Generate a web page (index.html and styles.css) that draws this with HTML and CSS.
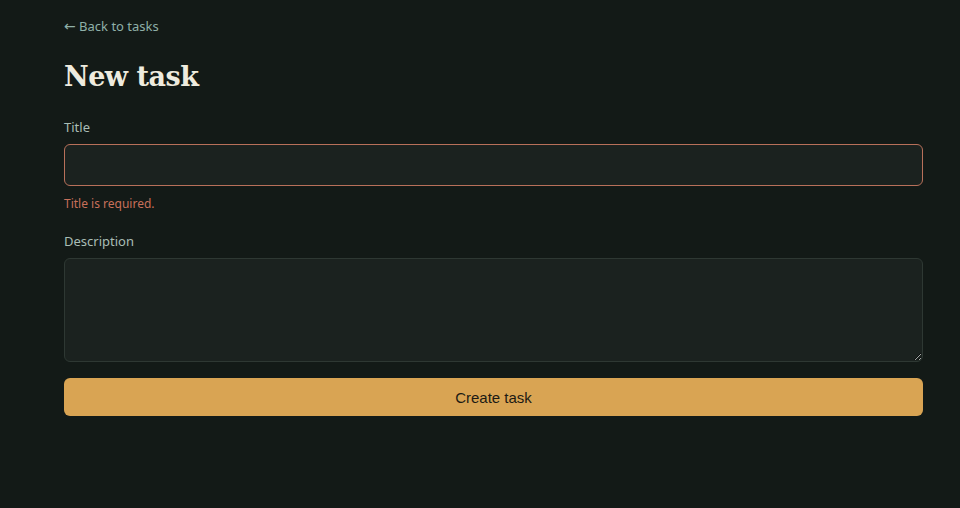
FILE: index.html
```html
<!DOCTYPE html>
<html>
<head>
<meta charset="utf-8">
<link rel="stylesheet" href="styles.css">
</head>
<body>
<main class="page">
  <a class="back" href="#"><span class="arrow">←</span> Back to tasks</a>
  <h1 class="title">New task</h1>
  <form class="form">
    <div class="field">
      <label class="label" for="t">Title</label>
      <input class="input input-error" id="t" type="text">
      <p class="error">Title is required.</p>
    </div>
    <div class="field">
      <label class="label" for="d">Description</label>
      <textarea class="input textarea" id="d"></textarea>
    </div>
    <button class="submit" type="button">Create task</button>
  </form>
</main>
</body>
</html>
```

FILE: styles.css
```css
html, body {
  margin: 0;
  padding: 0;
  background: #131a17;
}
body {
  font-family: "Noto Sans", "Open Sans", sans-serif;
  color: #a9bdb5;
}
.page {
  width: 859px;
  margin-left: 64px;
  padding-top: 14px;
}
.back {
  display: inline-block;
  color: #8fb0a8;
  text-decoration: none;
  font-size: 13px;
  line-height: 20px;
}
.arrow {
  font-family: "DejaVu Sans", sans-serif;
  font-size: 14px;
}
.title {
  font-family: "DejaVu Serif", Georgia, serif;
  font-weight: 700;
  font-size: 27px;
  line-height: 36px;
  color: #eeebde;
  margin: 23px 0 0;
  letter-spacing: -0.5px;
}
.form {
  margin-top: 22px;
  display: flex;
  flex-direction: column;
}
.field {
  display: flex;
  flex-direction: column;
  margin-bottom: 18px;
}
.label {
  font-size: 13px;
  line-height: 20px;
  margin-bottom: 7px;
  color: #a9bdb5;
}
.input {
  box-sizing: border-box;
  width: 100%;
  height: 42px;
  background: #1b221f;
  border: 1px solid #2e3833;
  border-radius: 6px;
  color: #e6e6e0;
  font: inherit;
  padding: 8px 10px;
  margin: 0;
}
.input-error {
  border-color: #b8705a;
}
.error {
  margin: 9px 0 0;
  font-size: 12px;
  line-height: 18px;
  color: #c8705a;
}
.textarea {
  height: 104px;
  resize: vertical;
  display: block;
}
.field:nth-child(2) {
  margin-bottom: 16px;
}
.submit {
  height: 38px;
  width: 100%;
  background: #d9a453;
  border: none;
  border-radius: 6px;
  color: #1c1a14;
  font-family: "Liberation Sans", Arial, sans-serif;
  font-size: 15px;
  cursor: pointer;
  margin-top: 0;
}
```
